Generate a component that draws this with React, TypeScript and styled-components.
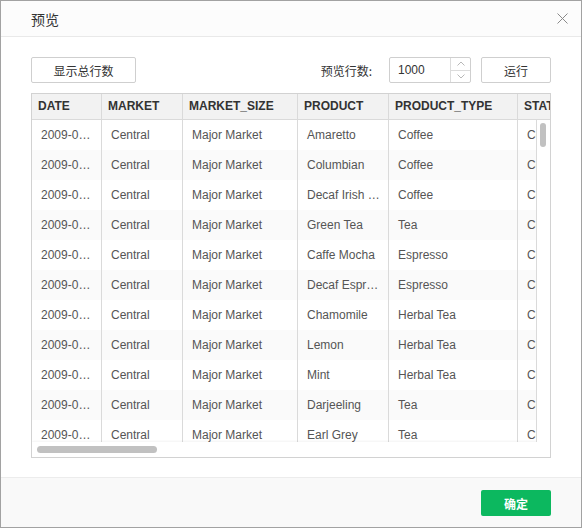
import React from "react";
import styled, { createGlobalStyle } from "styled-components";

const Global = createGlobalStyle`
  html, body { margin: 0; padding: 0; background: #fff; }
  body { font-family: "Liberation Sans", "Noto Sans CJK SC", sans-serif; }
  * { box-sizing: border-box; }
`;

const Dialog = styled.div`
  width: 582px;
  height: 528px;
  border: 1px solid #a2a2a2;
  background: #fff;
  display: flex;
  flex-direction: column;
  color: #333;
  font-size: 12px;
`;

const TitleBar = styled.div`
  height: 36px;
  flex: none;
  display: flex;
  align-items: center;
  justify-content: space-between;
  padding: 0 11px 0 30px;
  border-bottom: 1px solid #e9e9e9;
  background: #fcfcfc;
`;

const Title = styled.span`
  font-family: "Noto Sans CJK SC", sans-serif;
  font-size: 14px;
  color: #333;
  line-height: 20px;
`;

const CloseBtn = styled.button`
  width: 16px;
  height: 16px;
  padding: 0;
  border: 0;
  background: transparent;
  display: flex;
  align-items: center;
  justify-content: center;
  cursor: pointer;
`;

const Body = styled.div`
  flex: 1;
  display: flex;
  flex-direction: column;
  padding: 20px 30px 19px;
`;

const Toolbar = styled.div`
  height: 26px;
  display: flex;
  align-items: center;
  justify-content: space-between;
  margin-bottom: 10px;
`;

const Button = styled.button<{ $w: number }>`
  width: ${(p) => p.$w}px;
  height: 26px;
  border: 1px solid #cfcfcf;
  border-radius: 2px;
  background: #fff;
  color: #333;
  font-family: "Noto Sans CJK SC", sans-serif;
  font-size: 12px;
  padding: 0;
  cursor: pointer;
`;

const RightGroup = styled.div`
  display: flex;
  align-items: center;
  gap: 10px;
`;

const Label = styled.span`
  font-family: "Noto Sans CJK SC", sans-serif;
  font-size: 12px;
  color: #333;
  margin-right: 7px;
`;

const NumberBox = styled.div`
  width: 82px;
  height: 26px;
  border: 1px solid #cfcfcf;
  border-radius: 2px;
  display: flex;
`;

const NumberValue = styled.div`
  flex: 1;
  padding-left: 8px;
  line-height: 24px;
  font-size: 12px;
  color: #333;
`;

const Spinner = styled.div`
  width: 20px;
  border-left: 1px solid #dcdcdc;
  display: flex;
  flex-direction: column;
`;

const SpinBtn = styled.div<{ $top?: boolean }>`
  flex: 1;
  display: flex;
  align-items: center;
  justify-content: center;
  border-bottom: ${(p) => (p.$top ? "1px solid #dcdcdc" : "none")};
`;

const TableBox = styled.div`
  position: relative;
  height: 365px;
  border: 1px solid #d2d2d2;
  display: flex;
  flex-direction: column;
  overflow: hidden;
`;

const Viewport = styled.div`
  flex: 1;
  overflow: hidden;
`;

const Row = styled.div<{ $stripe?: boolean }>`
  display: flex;
  width: max-content;
  height: 30px;
  background: ${(p) => (p.$stripe ? "#fafafa" : "#fff")};
`;

const HeadRow = styled.div`
  display: flex;
  width: max-content;
  height: 26px;
  background: #f2f2f2;
  border-bottom: 1px solid #dadada;
`;

const HeadCell = styled.div<{ $w: number }>`
  width: ${(p) => p.$w}px;
  flex: none;
  padding: 0 6px;
  border-right: 1px solid #dadada;
  font-weight: bold;
  color: #333;
  line-height: 25px;
  white-space: nowrap;
  overflow: hidden;
`;

const Cell = styled.div<{ $w: number }>`
  width: ${(p) => p.$w}px;
  flex: none;
  padding: 0 8px 0 9px;
  border-right: 1px solid #dadada;
  color: #555;
  line-height: 30px;
  white-space: nowrap;
  overflow: hidden;
  text-overflow: ellipsis;
`;

const HScroll = styled.div`
  height: 15px;
  flex: none;
  position: relative;
  background: #fff;
  box-shadow: 0 -1px 2px rgba(0, 0, 0, 0.05);
`;

const HThumb = styled.div`
  position: absolute;
  left: 5px;
  top: 4px;
  width: 120px;
  height: 7px;
  border-radius: 4px;
  background: #c1c1c1;
`;

const VScroll = styled.div`
  position: absolute;
  top: 26px;
  right: 0;
  bottom: 15px;
  width: 14px;
  background: #fff;
  border-left: 1px solid #dadada;
`;

const VThumb = styled.div`
  position: absolute;
  left: 3px;
  top: 3px;
  width: 6px;
  height: 24px;
  border-radius: 3px;
  background: #c1c1c1;
`;

const Footer = styled.div`
  height: 50px;
  flex: none;
  border-top: 1px solid #ececec;
  background: #f9f9f9;
  display: flex;
  justify-content: flex-end;
  align-items: flex-start;
  padding: 12px 30px 0;
`;

const PrimaryButton = styled.button`
  width: 70px;
  height: 26px;
  border: 0;
  border-radius: 2px;
  background: #0cb85f;
  color: #fff;
  font-family: "Noto Sans CJK SC", sans-serif;
  font-size: 12px;
  font-weight: bold;
  padding: 0;
  cursor: pointer;
`;

const columns = [
  { key: "DATE", w: 70 },
  { key: "MARKET", w: 81 },
  { key: "MARKET_SIZE", w: 115 },
  { key: "PRODUCT", w: 91 },
  { key: "PRODUCT_TYPE", w: 129 },
  { key: "STATE", w: 100 },
];

const products: [string, string][] = [
  ["Amaretto", "Coffee"],
  ["Columbian", "Coffee"],
  ["Decaf Irish Cream", "Coffee"],
  ["Green Tea", "Tea"],
  ["Caffe Mocha", "Espresso"],
  ["Decaf Espresso", "Espresso"],
  ["Chamomile", "Herbal Tea"],
  ["Lemon", "Herbal Tea"],
  ["Mint", "Herbal Tea"],
  ["Darjeeling", "Tea"],
  ["Earl Grey", "Tea"],
];

const rows = products.map(([p, t]) => [
  "2009-01-01",
  "Central",
  "Major Market",
  p,
  t,
  "Colorado",
]);

export default function App() {
  return (
    <>
      <Global />
      <Dialog>
        <TitleBar>
          <Title>预览</Title>
          <CloseBtn aria-label="close">
            <svg width="11" height="11" viewBox="0 0 11 11">
              <path d="M0.5 0.5 L10.5 10.5 M10.5 0.5 L0.5 10.5" stroke="#8a8a8a" strokeWidth="1" fill="none" />
            </svg>
          </CloseBtn>
        </TitleBar>
        <Body>
          <Toolbar>
            <Button $w={105}>显示总行数</Button>
            <RightGroup>
              <Label>预览行数:</Label>
              <NumberBox>
                <NumberValue>1000</NumberValue>
                <Spinner>
                  <SpinBtn $top>
                    <svg width="8" height="5" viewBox="0 0 8 5">
                      <path d="M0.5 4.5 L4 1 L7.5 4.5" stroke="#b8b8b8" strokeWidth="1" fill="none" />
                    </svg>
                  </SpinBtn>
                  <SpinBtn>
                    <svg width="8" height="5" viewBox="0 0 8 5">
                      <path d="M0.5 0.5 L4 4 L7.5 0.5" stroke="#b8b8b8" strokeWidth="1" fill="none" />
                    </svg>
                  </SpinBtn>
                </Spinner>
              </NumberBox>
              <Button $w={70}>运行</Button>
            </RightGroup>
          </Toolbar>
          <TableBox>
            <Viewport>
              <HeadRow>
                {columns.map((c) => (
                  <HeadCell key={c.key} $w={c.w}>
                    {c.key}
                  </HeadCell>
                ))}
              </HeadRow>
              {rows.map((r, i) => (
                <Row key={i} $stripe={i % 2 === 1}>
                  {r.map((v, j) => (
                    <Cell key={j} $w={columns[j].w}>
                      {v}
                    </Cell>
                  ))}
                </Row>
              ))}
            </Viewport>
            <HScroll>
              <HThumb />
            </HScroll>
            <VScroll>
              <VThumb />
            </VScroll>
          </TableBox>
        </Body>
        <Footer>
          <PrimaryButton>确定</PrimaryButton>
        </Footer>
      </Dialog>
    </>
  );
}
